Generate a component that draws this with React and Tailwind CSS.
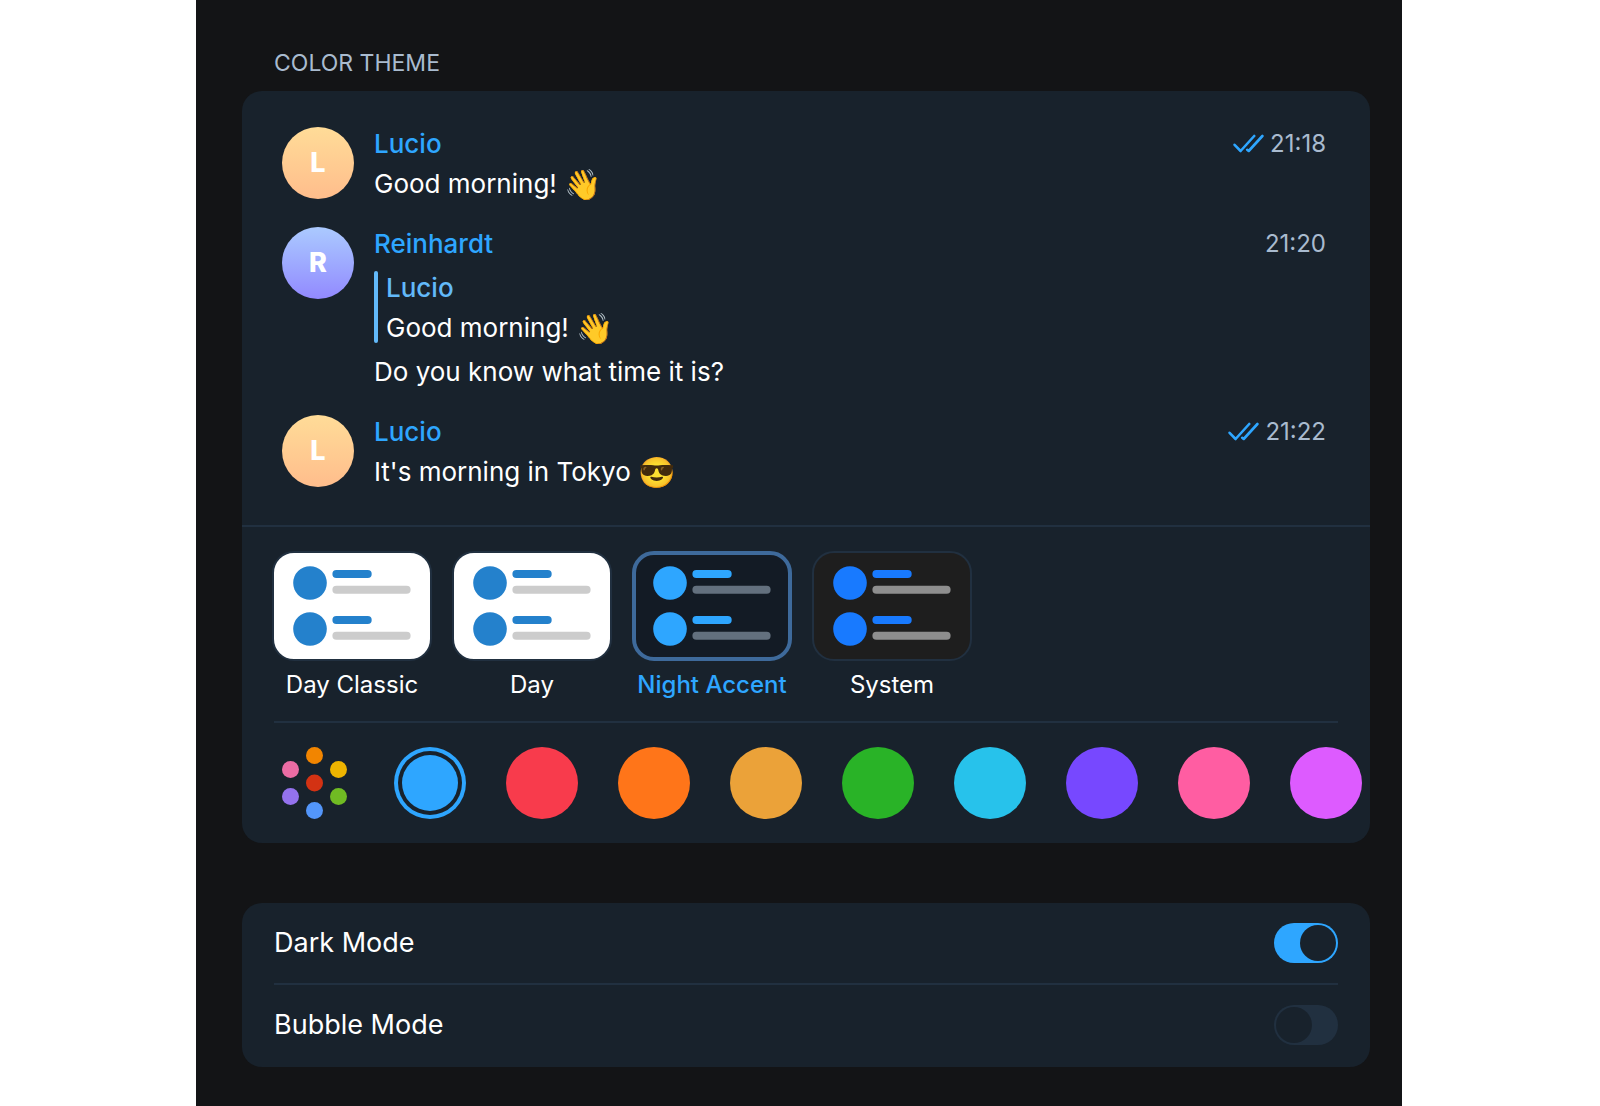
import React, { useState } from "react";

const messages = [
  { name: "Lucio", text: "Good morning!", emoji: "👋", time: "21:18", read: true, avatar: "from-[#ffdc98] to-[#ffbd8c]" },
  {
    name: "Reinhardt",
    text: "Do you know what time it is?",
    time: "21:20",
    reply: { name: "Lucio", text: "Good morning!", emoji: "👋" },
    avatar: "from-[#abcaff] to-[#9289ff]",
  },
  { name: "Lucio", text: "It's morning in Tokyo", emoji: "😎", time: "21:22", read: true, avatar: "from-[#ffdc98] to-[#ffbd8c]" },
];

const themes = [
  { id: "classic", label: "Day Classic", bg: "bg-white", accent: "#2481cc", line: "#cccccc" },
  { id: "day", label: "Day", bg: "bg-white", accent: "#2481cc", line: "#cccccc" },
  { id: "night", label: "Night Accent", bg: "bg-[#131b25]", accent: "#2ea6ff", line: "#63707e" },
  { id: "system", label: "System", bg: "bg-[#1e1e1e]", accent: "#187aff", line: "#8e8e8e" },
];

const accents = [
  { id: "blue", color: "bg-[#2ea6ff]" },
  { id: "red", color: "bg-[#f83b4c]" },
  { id: "orange", color: "bg-[#ff7519]" },
  { id: "amber", color: "bg-[#eba239]" },
  { id: "green", color: "bg-[#29b327]" },
  { id: "cyan", color: "bg-[#27c2eb]" },
  { id: "violet", color: "bg-[#7748ff]" },
  { id: "pink", color: "bg-[#ff5da2]" },
  { id: "magenta", color: "bg-[#dd5bff]" },
];

const ReadIcon = () => (
  <svg className="w-[31px] h-5" viewBox="0 0 31 20" fill="none" stroke="#2ea6ff" strokeWidth="2.6" strokeLinecap="round" strokeLinejoin="round">
    <path d="M1.6 10.8l6 6.2L21.2 2M14.2 15.8l1.5 1.2L29.4 2" />
  </svg>
);

const PaletteIcon = () => (
  <svg className="w-[72px] h-[72px]" viewBox="0 0 72 72">
    <circle cx="32.5" cy="8.5" r="8.5" fill="#f28500" />
    <circle cx="56.5" cy="22.5" r="8.5" fill="#eeb400" />
    <circle cx="56.5" cy="49.5" r="8.5" fill="#70bb23" />
    <circle cx="32.5" cy="63.5" r="8.5" fill="#5396fa" />
    <circle cx="8.5" cy="49.5" r="8.5" fill="#9472ee" />
    <circle cx="8.5" cy="22.5" r="8.5" fill="#eb6ca4" />
    <circle cx="32.5" cy="36" r="8.5" fill="#d33213" />
  </svg>
);

// The selected border is 2px thicker, so the view box is cut by the same amount
const ThemeThumb = ({ accent, line, selected }) => (
  <svg className="w-full h-full" viewBox={selected ? "2 2 152 102" : "0 0 156 106"}>
    {[0, 46].map((y) => (
      <g key={y}>
        <circle cx="36" cy={30 + y} r="16.8" fill={accent} />
        <rect x="58.4" y={17 + y} width="39.3" height="8" rx="4" fill={accent} />
        <rect x="58.4" y={32.7 + y} width="78.2" height="8" rx="4" fill={line} />
      </g>
    ))}
  </svg>
);

const MessageText = ({ text, emoji }) => (
  <p className="h-10 flex items-center gap-2">
    {text}
    {emoji && <span className="text-[30px]">{emoji}</span>}
  </p>
);

const Message = ({ message }) => (
  <li className="flex">
    <div className={`mt-[3px] mr-5 w-18 h-18 shrink-0 rounded-full flex items-center justify-center bg-linear-to-b text-[27px] font-extrabold text-white ${message.avatar}`}>
      {message.name[0]}
    </div>
    <div className="grow">
      <div className="flex items-center justify-between">
        <span className="font-medium text-[#2ea6ff]">{message.name}</span>
        <span className="flex items-center gap-1.5 text-2xl text-[#a9bbcf]">
          {message.read && <ReadIcon />}
          <time className="leading-10">{message.time}</time>
        </span>
      </div>
      {message.reply && (
        <blockquote className="my-1 flex gap-2">
          <div className="mt-[3px] mb-[5px] w-1 rounded-sm bg-[#62b9f9]" />
          <div>
            <div className="font-medium text-[#62b9f9]">{message.reply.name}</div>
            <MessageText text={message.reply.text} emoji={message.reply.emoji} />
          </div>
        </blockquote>
      )}
      <MessageText text={message.text} emoji={message.emoji} />
    </div>
  </li>
);

const ThemeOption = ({ item, selected, onSelect }) => (
  <label className="w-40 flex flex-col items-center cursor-pointer">
    <input type="radio" name="theme" className="sr-only" checked={selected} onChange={onSelect} />
    <div className={`w-full h-[110px] overflow-hidden rounded-[22px] ${item.bg} ${selected ? "border-4 border-[#3e6a9b]" : "border-2 border-[#213040]"}`}>
      <ThemeThumb accent={item.accent} line={item.line} selected={selected} />
    </div>
    <span className={`mt-2 text-2xl leading-8 whitespace-nowrap ${selected ? "font-medium text-[#2ea6ff]" : ""}`}>{item.label}</span>
  </label>
);

const Switch = ({ label, checked, onChange }) => (
  <label className="h-20 flex items-center justify-between cursor-pointer">
    <span>{label}</span>
    <input
      type="checkbox"
      role="switch"
      className="peer sr-only"
      checked={checked}
      onChange={(event) => onChange(event.target.checked)}
    />
    <span className={`w-16 h-10 p-0.5 rounded-full flex transition ${checked ? "justify-end bg-[#2ea6ff]" : "bg-[#213040]"}`}>
      <span className="w-9 h-9 rounded-full bg-[#18222c]" />
    </span>
  </label>
);

const App = () => {
  const [theme, setTheme] = useState("night");
  const [accent, setAccent] = useState("blue");
  const [darkMode, setDarkMode] = useState(true);
  const [bubbleMode, setBubbleMode] = useState(false);

  return (
    <div className="min-h-screen bg-white pl-[196px] pr-[198px] font-['Inter','Noto_Color_Emoji',sans-serif] text-white">
      <main className="min-h-screen bg-[#131416] pl-[46px] pr-8 pt-[43px]">
        <h1 className="pl-8 pb-2 text-[23px] leading-10 text-[#a9bbcf]">COLOR THEME</h1>

        <section className="rounded-[20px] overflow-hidden bg-[#18222c]">
          {/* Chat preview */}
          <ul className="py-[33px] pl-10 pr-11 space-y-5 text-[26px] leading-10">
            {messages.map((message, index) => (
              <Message key={index} message={message} />
            ))}
          </ul>

          {/* Themes */}
          <div className="border-t-2 border-[#213040] pt-6 px-[30px] pb-5 flex gap-5">
            {themes.map((item) => (
              <ThemeOption key={item.id} item={item} selected={theme === item.id} onSelect={() => setTheme(item.id)} />
            ))}
          </div>

          {/* Accent colors */}
          <div className="mx-8 h-0.5 bg-[#213040]" />
          <div className="py-6 pl-10 flex gap-10">
            <button type="button" aria-label="Custom color" className="shrink-0 cursor-pointer">
              <PaletteIcon />
            </button>
            {accents.map((item) => (
              <input
                key={item.id}
                type="radio"
                name="accent"
                aria-label={item.id}
                checked={accent === item.id}
                onChange={() => setAccent(item.id)}
                className={`appearance-none shrink-0 rounded-full cursor-pointer ${item.color} ${accent === item.id ? "m-2 w-14 h-14 ring-4 ring-offset-4 ring-[#2ea6ff] ring-offset-[#18222c]" : "w-18 h-18"}`}
              />
            ))}
          </div>
        </section>

        <section className="mt-15 px-8 pb-0.5 rounded-[20px] bg-[#18222c] text-[27px]">
          <Switch label="Dark Mode" checked={darkMode} onChange={setDarkMode} />
          <div className="h-0.5 bg-[#213040]" />
          <Switch label="Bubble Mode" checked={bubbleMode} onChange={setBubbleMode} />
        </section>
      </main>
    </div>
  );
};

export default App;
